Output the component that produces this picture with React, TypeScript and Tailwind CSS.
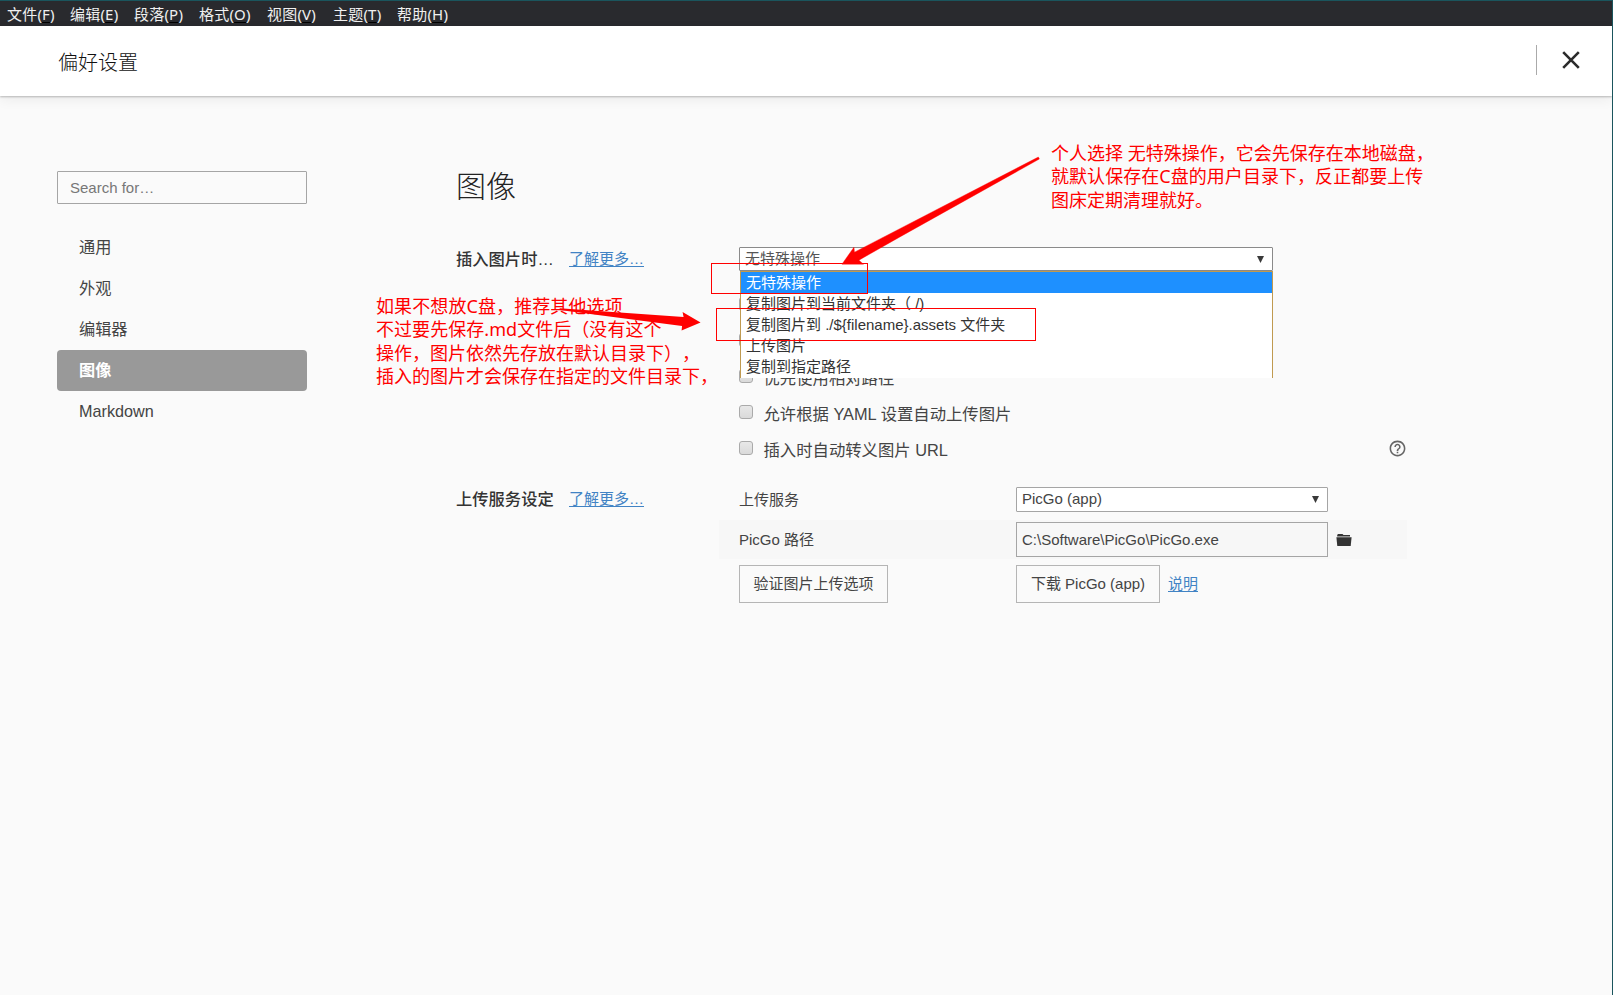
import { MdHelpOutline } from 'react-icons/md'

const menus = [
  { label: '文件', key: 'F', w: 'w-[63px]' },
  { label: '编辑', key: 'E', w: 'w-[64px]' },
  { label: '段落', key: 'P', w: 'w-[65px]' },
  { label: '格式', key: 'O', w: 'w-[68px]' },
  { label: '视图', key: 'V', w: 'w-[66px]' },
  { label: '主题', key: 'T', w: 'w-[64px]' },
  { label: '帮助', key: 'H', w: 'w-[60px]' },
]

const sections = ['通用', '外观', '编辑器', '图像', 'Markdown']

const insertOptions = [
  '无特殊操作',
  '复制图片到当前文件夹（ /)',
  '复制图片到 ./${filename}.assets 文件夹',
  '上传图片',
  '复制到指定路径',
]

// the first two are fully behind the open list
const checks = ['', '', '优先使用相对路径', '允许根据 YAML 设置自动上传图片', '插入时自动转义图片 URL']

function Caret() {
  return (
    <svg className="h-[7px] w-[7px] shrink-0" viewBox="0 0 7 7">
      <path d="M0 0H7L3.5 7Z" fill="#3a3a3a" />
    </svg>
  )
}

function Folder() {
  return (
    <svg className="h-[12px] w-[16px]" viewBox="0 0 16 12">
      <path d="M2 0H6.5L7.5 1H14V2.4H1.2V1Z" fill="#333" />
      <path d="M0.4 3.2H15.6L14.7 12H1.3Z" fill="#333" />
    </svg>
  )
}

function MenuBar() {
  return (
    <div className="flex h-[26px] items-center border-t border-[#1a555d] bg-[#292a2e] pl-[7px] text-[15px] text-[#f0f0f0]">
      {menus.map(m => (
        <div key={m.key} className={`${m.w} shrink-0 whitespace-nowrap font-['Noto_Sans','Noto_Sans_CJK_SC',sans-serif] leading-[24px] tracking-[0.2px]`}>
          {m.label}(<span className="underline decoration-black underline-offset-2">{m.key}</span>)
        </div>
      ))}
    </div>
  )
}

function Header() {
  return (
    <header className="flex h-[70px] items-center bg-white pl-[58px] shadow-[0_1px_2px_rgba(0,0,0,0.25),0_4px_12px_rgba(0,0,0,0.06)]">
      <div className="pt-[3px] text-[20px] font-light leading-[30px] text-[#111]">偏好设置</div>
      <div className="ml-auto flex items-center pb-[2px]">
        <div className="h-[30px] w-px bg-[#aaa]" />
        <svg className="ml-[25px] mr-[32px] h-[18px] w-[18px]" viewBox="0 0 18 18">
          <path d="M1.2 1.2L16.8 16.8M16.8 1.2L1.2 16.8" stroke="#2b2b2b" strokeWidth="2.6" />
        </svg>
      </div>
    </header>
  )
}

function Sidebar() {
  return (
    <aside className="w-[250px] shrink-0 pt-[75px]">
      <input placeholder="Search for…" className="block h-[33px] w-full rounded-[1px] border border-[#a5a5a5] px-[12px] text-[15px] placeholder-[#777] outline-none" />
      <nav className="mt-[23px]">
        {sections.map(s => (
          <div key={s} className={s === '图像' ? 'h-[41px] rounded-[4px] bg-[#999] pl-[22px] text-[16.2px] font-bold leading-[40px] text-white' : 'h-[41px] pl-[22px] text-[16.2px] leading-[40px] text-[#444]'}>{s}</div>
        ))}
      </nav>
    </aside>
  )
}

function InsertSelect() {
  return (
    <div className="relative w-[534px]">
      <div className="flex h-[24px] items-center justify-between rounded-[1px] border border-[#8a8a8a] bg-white pl-[5px] pr-[8px] text-[15px] text-[#555]">
        <span className="pt-px">无特殊操作</span>
        <Caret />
      </div>
      <div className="absolute left-px right-0 top-[24px] z-10 h-[107px] border-x border-t border-[#c09a50] bg-white text-[15px] leading-[21px] text-[#333]">
        {insertOptions.map((o, i) => (
          <div key={o} className={i === 0 ? 'h-[21px] whitespace-pre bg-[#1e90ff] pl-[5px] text-white' : 'h-[21px] whitespace-pre pl-[5px]'}>{o}</div>
        ))}
      </div>
    </div>
  )
}

function ImageSettings() {
  return (
    <main className="ml-[149px] w-[951px] shrink-0">
      <h1 className="mt-[68px] h-[45px] text-[30px] font-light leading-[45px] text-[#222]">图像</h1>

      <div className="mt-[38px] flex">
        <div className="flex h-[25px] w-[283px] shrink-0 items-center">
          <span className="w-[113px] text-[16.3px] font-medium">插入图片时…</span>
          <a className="text-[15px] text-[#4183c4] underline underline-offset-2">了解更多…</a>
        </div>
        <InsertSelect />
      </div>

      <div className="ml-[283px] mt-[16px] w-[668px]">
        {checks.map((c, i) => (
          <div key={i} className="flex h-[36px] items-center">
            <span className="mb-[5px] h-[14px] w-[14px] shrink-0 rounded-[3px] border border-[#aaa] bg-gradient-to-b from-[#e8e8e8] to-[#dadada]" />
            <span className="ml-[10.5px] text-[16.35px] text-[#444]">{c}</span>
            {i === 4 && <MdHelpOutline className="mb-[3px] ml-auto h-[19px] w-[19px] text-[#666]" />}
          </div>
        ))}
      </div>

      <div className="mt-[19px] flex">
        <div className="flex h-[25px] w-[263px] shrink-0 items-center">
          <span className="w-[113px] text-[16.3px] font-medium">上传服务设定</span>
          <a className="text-[15px] text-[#4183c4] underline underline-offset-2">了解更多…</a>
        </div>
        <div className="w-[688px] text-[15px] text-[#444]">
          <div className="flex h-[33px] pl-[20px]">
            <div className="h-[25px] w-[277px] leading-[26px]">上传服务</div>
            <div className="flex h-[25px] w-[312px] items-center justify-between rounded-[1px] border border-[#a5a5a5] bg-white pl-[5px] pr-[8px]">
              <span className="pb-px">PicGo (app)</span>
              <Caret />
            </div>
          </div>
          <div className="flex h-[39px] items-center bg-[#f7f7f7] pl-[20px]">
            <div className="w-[277px] pt-[2px]">PicGo 路径</div>
            <input readOnly value="C:\Software\PicGo\PicGo.exe" className="h-[35px] w-[312px] border border-[#a5a5a5] bg-transparent px-[5px] outline-none" />
            <span className="ml-[8px]"><Folder /></span>
          </div>
          <div className="flex items-center pl-[20px] pt-[6px]">
            <div className="w-[277px]">
              <button className="h-[38px] w-[149px] border border-[#b5b5b5]">验证图片上传选项</button>
            </div>
            <button className="h-[38px] w-[144px] border border-[#b5b5b5]">下载 PicGo (app)</button>
            <a className="ml-[8px] text-[#4183c4] underline underline-offset-2">说明</a>
          </div>
        </div>
      </div>
    </main>
  )
}

/** Red notes, boxes and arrows drawn on top of the window. */
function Annotations() {
  return (
    <div className="pointer-events-none absolute inset-0 z-20 text-[18px] leading-[23.4px] text-[#ff0000] [text-spacing-trim:space-all]">
      <div className="absolute left-[376px] top-[295px] whitespace-pre font-['Noto_Sans','Noto_Sans_CJK_SC',sans-serif]">
        <div className="tracking-[0.1px]">如果不想放C盘，推荐其他选项</div>
        <div className="tracking-[0.05px]">不过要先保存.md文件后（没有这个</div>
        <div>操作，图片依然先存放在默认目录下），</div>
        <div>插入的图片才会保存在指定的文件目录下，</div>
      </div>
      <div className="absolute left-[1051px] top-[142px] whitespace-pre font-['Noto_Sans','Noto_Sans_CJK_SC',sans-serif]">
        <div>个人选择 无特殊操作，它会先保存在本地磁盘，</div>
        <div className="tracking-[0.05px]">就默认保存在C盘的用户目录下，反正都要上传</div>
        <div>图床定期清理就好。</div>
      </div>
      <div className="absolute left-[711px] top-[263px] h-[31px] w-[157px] border border-[#f00]" />
      <div className="absolute left-[716px] top-[308px] h-[33px] w-[320px] border border-[#f00]" />
      <svg className="absolute inset-0 h-full w-full" viewBox="0 0 1613 995">
        <path d="M1039 156.8L855 252L854.5 247L842.5 264L864 264L859.5 260L900 237L1040 158.8Z" fill="#f00" stroke="#f00" strokeWidth="0.4" />
        <path d="M560 308.2L684 317L683 312L701 322.5L682 330.5L682.5 326L560 310Z" fill="#f00" />
      </svg>
    </div>
  )
}

export default function App() {
  return (
    <div className="relative h-[995px] w-[1613px] overflow-hidden border-r border-[#1a555d] bg-[#fafafa] font-['Liberation_Sans','Noto_Sans_CJK_SC',sans-serif] text-[#333]">
      <MenuBar />
      <Header />
      <div className="flex pl-[57px]">
        <Sidebar />
        <ImageSettings />
      </div>
      <Annotations />
    </div>
  )
}
